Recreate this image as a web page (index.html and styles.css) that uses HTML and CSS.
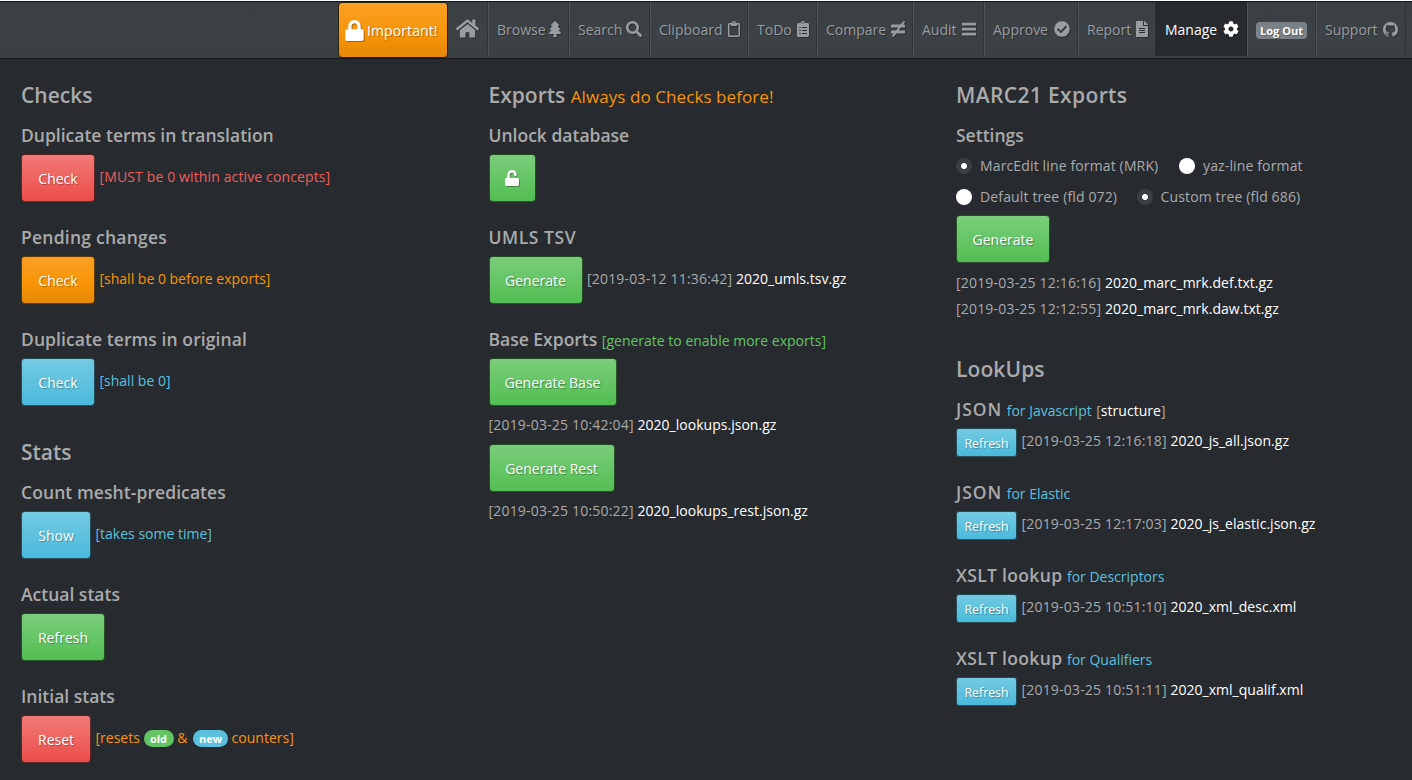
FILE: index.html
```html
<!DOCTYPE html>
<html lang="en">
<head>
<meta charset="utf-8">
<title>Manage</title>
<link rel="stylesheet" href="styles.css">
</head>
<body>
<nav class="navbar">
  <a class="nav-important"><svg class="icon" width="19" height="21" viewBox="0 0 448 512"><path d="M400 224h-24v-72C376 68.2 307.8 0 224 0S72 68.2 72 152v72H48c-26.5 0-48 21.5-48 48v192c0 26.5 21.5 48 48 48h352c26.5 0 48-21.5 48-48V272c0-26.5-21.5-48-48-48zm-104 0H152v-72c0-39.7 32.3-72 72-72s72 32.3 72 72v72z"/></svg><span>Important!</span></a>
  <a class="nav-item nav-home"><svg class="icon" width="23" height="21" viewBox="0 0 576 512"><path d="M280.37 148.26L96 300.11V464a16 16 0 0 0 16 16l112.06-.29a16 16 0 0 0 15.92-16V368a16 16 0 0 1 16-16h64a16 16 0 0 1 16 16v95.64a16 16 0 0 0 16 16.05L464 480a16 16 0 0 0 16-16V300L295.67 148.26a12.19 12.19 0 0 0-15.3 0zM571.6 251.47L488 182.56V44.05a12 12 0 0 0-12-12h-56a12 12 0 0 0-12 12v72.61L318.47 43a48 48 0 0 0-61 0L4.34 251.47a12 12 0 0 0-1.6 16.9l25.5 31A12 12 0 0 0 45.15 301l235.22-193.74a12.19 12.19 0 0 1 15.3 0L530.9 301a12 12 0 0 0 16.9-1.6l25.5-31a12 12 0 0 0-1.7-16.93z"/></svg></a>
  <a class="nav-item nav-browse"><span>Browse</span><svg class="icon" width="12" height="16" viewBox="0 0 384 512"><path d="M378.31 378.49L298.42 288h30.63c9.01 0 16.98-5 20.78-13.06 3.8-8.04 2.55-17.26-3.28-24.05L268.42 160h28.89c9.1 0 17.3-5.35 20.86-13.61 3.52-8.13 1.86-17.59-4.24-24.08L203.66 4.83c-6.03-6.45-17.28-6.45-23.32 0L70.06 122.31c-6.1 6.49-7.75 15.95-4.24 24.08C69.38 154.65 77.59 160 86.69 160h28.89l-78.14 90.91c-5.81 6.78-7.06 15.99-3.27 24.04C37.97 283 45.93 288 54.95 288h30.63L5.69 378.49c-6 6.79-7.36 16.09-3.56 24.26 3.75 8.05 12 13.25 21.01 13.25H160v24.45l-30.29 48.4c-5.32 10.64 2.42 23.16 14.31 23.16h95.96c11.89 0 19.63-12.52 14.31-23.16L224 440.45V416h136.86c9.01 0 17.26-5.2 21.01-13.25 3.8-8.17 2.44-17.47-3.56-24.26z"/></svg></a>
  <a class="nav-item nav-search"><span>Search</span><svg class="icon" width="16" height="16" viewBox="0 0 512 512"><path d="M505 442.7L405.3 343c-4.5-4.5-10.6-7-17-7H372c27.6-35.3 44-79.7 44-128C416 93.1 322.9 0 208 0S0 93.1 0 208s93.1 208 208 208c48.3 0 92.7-16.4 128-44v16.3c0 6.4 2.5 12.5 7 17l99.7 99.7c9.4 9.4 24.6 9.4 33.9 0l28.3-28.3c9.4-9.4 9.4-24.6.1-34zM208 336c-70.7 0-128-57.2-128-128 0-70.7 57.2-128 128-128 70.7 0 128 57.2 128 128 0 70.7-57.2 128-128 128z"/></svg></a>
  <a class="nav-item nav-clipboard"><span>Clipboard</span><svg class="icon" width="12" height="16" viewBox="0 0 384 512"><path d="M336 64h-80c0-35.3-28.7-64-64-64s-64 28.7-64 64H48C21.5 64 0 85.5 0 112v352c0 26.5 21.5 48 48 48h288c26.5 0 48-21.5 48-48V112c0-26.5-21.5-48-48-48zM192 40c13.3 0 24 10.7 24 24s-10.7 24-24 24-24-10.7-24-24 10.7-24 24-24zm144 418c0 3.3-2.7 6-6 6H54c-3.3 0-6-2.7-6-6V118c0-3.3 2.7-6 6-6h42v36c0 6.6 5.4 12 12 12h168c6.6 0 12-5.4 12-12v-36h42c3.3 0 6 2.7 6 6z"/></svg></a>
  <a class="nav-item nav-todo"><span>ToDo</span><svg class="icon" width="12" height="16" viewBox="0 0 384 512"><path fill-rule="evenodd" d="M336 64h-80c0-35.3-28.7-64-64-64s-64 28.7-64 64H48C21.5 64 0 85.5 0 112v352c0 26.5 21.5 48 48 48h288c26.5 0 48-21.5 48-48V112c0-26.5-21.5-48-48-48zM192 40c13.3 0 24 10.7 24 24s-10.7 24-24 24-24-10.7-24-24 10.7-24 24-24zM72 208a24 24 0 1 1 48 0 24 24 0 1 1-48 0zm0 96a24 24 0 1 1 48 0 24 24 0 1 1-48 0zm0 96a24 24 0 1 1 48 0 24 24 0 1 1-48 0zM160 192h160v32H160zm0 96h160v32H160zm0 96h160v32H160z"/></svg></a>
  <a class="nav-item nav-compare"><span>Compare</span><svg class="icon" width="14" height="16" viewBox="0 0 448 512"><path d="M416 208c17.67 0 32-14.33 32-32v-32c0-17.67-14.33-32-32-32h-23.88l51.87-66.81c5.37-7.02 4.04-17.06-2.97-22.43L415.61 3.3c-7.02-5.38-17.06-4.04-22.44 2.97L311.09 112H32c-17.67 0-32 14.33-32 32v32c0 17.67 14.33 32 32 32h204.56l-74.53 96H32c-17.67 0-32 14.33-32 32v32c0 17.67 14.33 32 32 32h55.49l-51.87 66.81c-5.37 7.01-4.04 17.05 2.97 22.43L64 508.7c7.02 5.38 17.06 4.04 22.43-2.97L168.52 400H416c17.67 0 32-14.33 32-32v-32c0-17.67-14.33-32-32-32H243.05l74.53-96H416z"/></svg></a>
  <a class="nav-item nav-audit"><span>Audit</span><svg class="icon" width="14" height="16" viewBox="0 0 448 512"><path d="M16 52h416a16 16 0 0 1 16 16v56a16 16 0 0 1-16 16H16a16 16 0 0 1-16-16V68a16 16 0 0 1 16-16zm0 160h416a16 16 0 0 1 16 16v56a16 16 0 0 1-16 16H16a16 16 0 0 1-16-16v-56a16 16 0 0 1 16-16zm0 160h416a16 16 0 0 1 16 16v56a16 16 0 0 1-16 16H16a16 16 0 0 1-16-16v-56a16 16 0 0 1 16-16z"/></svg></a>
  <a class="nav-item nav-approve"><span>Approve</span><svg class="icon" width="16" height="16" viewBox="0 0 512 512"><path d="M504 256c0 136.967-111.033 248-248 248S8 392.967 8 256 119.033 8 256 8s248 111.033 248 248zM227.314 387.314l184-184c6.248-6.248 6.248-16.379 0-22.627l-22.627-22.627c-6.248-6.249-16.379-6.249-22.628 0L216 308.118l-70.059-70.059c-6.248-6.248-16.379-6.248-22.628 0l-22.627 22.627c-6.248 6.248-6.248 16.379 0 22.627l104 104c6.249 6.249 16.379 6.249 22.628.001z"/></svg></a>
  <a class="nav-item nav-report"><span>Report</span><svg class="icon" width="12" height="16" viewBox="0 0 384 512"><path d="M224 136V0H24C10.7 0 0 10.7 0 24v464c0 13.3 10.7 24 24 24h336c13.3 0 24-10.7 24-24V160H248c-13.2 0-24-10.8-24-24zm64 236c0 6.6-5.4 12-12 12H108c-6.6 0-12-5.4-12-12v-8c0-6.6 5.4-12 12-12h168c6.6 0 12 5.4 12 12v8zm0-64c0 6.6-5.4 12-12 12H108c-6.6 0-12-5.4-12-12v-8c0-6.6 5.4-12 12-12h168c6.6 0 12 5.4 12 12v8zm0-72v8c0 6.6-5.4 12-12 12H108c-6.6 0-12-5.4-12-12v-8c0-6.6 5.4-12 12-12h168c6.6 0 12 5.4 12 12zm96-114.1v6.1H256V0h6.1c6.4 0 12.5 2.5 17 7l97.9 98c4.5 4.5 7 10.6 7 16.9z"/></svg></a>
  <a class="nav-item nav-manage active"><span>Manage</span><svg class="icon" width="16" height="16" viewBox="0 0 512 512"><path d="M487.4 315.7l-42.6-24.6c4.3-23.2 4.3-47 0-70.2l42.6-24.6c4.9-2.8 7.1-8.6 5.5-14-11.1-35.6-30-67.8-54.7-94.6-3.8-4.1-10-5.1-14.8-2.3L380.8 110c-17.9-15.4-38.5-27.3-60.8-35.1V25.8c0-5.6-3.9-10.5-9.4-11.7-36.7-8.2-74.3-7.8-109.2 0-5.5 1.2-9.4 6.1-9.4 11.7V75c-22.2 7.9-42.8 19.8-60.8 35.1L88.7 85.5c-4.9-2.8-11-1.9-14.8 2.3-24.7 26.7-43.6 58.9-54.7 94.6-1.7 5.4.6 11.2 5.5 14L67.3 221c-4.3 23.2-4.3 47 0 70.2l-42.6 24.6c-4.9 2.8-7.1 8.6-5.5 14 11.1 35.6 30 67.8 54.7 94.6 3.8 4.1 10 5.1 14.8 2.3l42.6-24.6c17.9 15.4 38.5 27.3 60.8 35.1v49.2c0 5.6 3.9 10.5 9.4 11.7 36.7 8.2 74.3 7.8 109.2 0 5.5-1.2 9.4-6.1 9.4-11.7v-49.2c22.2-7.9 42.8-19.8 60.8-35.1l42.6 24.6c4.9 2.8 11 1.9 14.8-2.3 24.7-26.7 43.6-58.9 54.7-94.6 1.5-5.5-.7-11.3-5.6-14.1zM256 336c-44.1 0-80-35.9-80-80s35.9-80 80-80 80 35.9 80 80-35.9 80-80 80z"/></svg></a>
  <a class="nav-item nav-logout"><span class="logout">Log Out</span></a>
  <a class="nav-item nav-support"><span>Support</span><svg class="icon" width="15" height="15" viewBox="0 0 16 16"><path d="M8 0C3.58 0 0 3.58 0 8c0 3.54 2.29 6.53 5.47 7.59.4.07.55-.17.55-.38 0-.19-.01-.82-.01-1.49-2.01.37-2.53-.49-2.69-.94-.09-.23-.48-.94-.82-1.13-.28-.15-.68-.52-.01-.53.63-.01 1.08.58 1.23.82.72 1.21 1.87.87 2.33.66.07-.52.28-.87.51-1.07-1.78-.2-3.64-.89-3.64-3.95 0-.87.31-1.59.82-2.15-.08-.2-.36-1.02.08-2.12 0 0 .67-.21 2.2.82.64-.18 1.32-.27 2-.27s1.36.09 2 .27c1.53-1.04 2.2-.82 2.2-.82.44 1.1.16 1.92.08 2.12.51.56.82 1.27.82 2.15 0 3.07-1.87 3.75-3.65 3.95.29.25.54.73.54 1.48 0 1.07-.01 1.93-.01 2.2 0 .21.15.46.55.38A8.01 8.01 0 0 0 16 8c0-4.42-3.58-8-8-8z"/></svg></a>
</nav>
<main class="columns">
  <div class="column">
    <h4>Checks</h4>
    <h5>Duplicate terms in translation</h5>
    <div class="row"><a class="btn red w-check">Check</a><span class="note danger">[MUST be 0 within active concepts]</span></div>
    <h5 class="loose">Pending changes</h5>
    <div class="row"><a class="btn orange w-check">Check</a><span class="note warning">[shall be 0 before exports]</span></div>
    <h5 class="slack">Duplicate terms in original</h5>
    <div class="row"><a class="btn blue w-check">Check</a><span class="note info">[shall be 0]</span></div>
    <h4 class="next">Stats</h4>
    <h5 class="slack">Count mesht-predicates</h5>
    <div class="row"><a class="btn blue w-show">Show</a><span class="note info">[takes some time]</span></div>
    <h5>Actual stats</h5>
    <div class="row"><a class="btn green w-refresh">Refresh</a></div>
    <h5>Initial stats</h5>
    <div class="row"><a class="btn red w-show">Reset</a><span class="note warning">[resets <b class="pill pill-old">old</b> <span class="amp">&amp;</span> <b class="pill pill-new">new</b> counters]</span></div>
  </div>
  <div class="column">
    <h4>Exports <small class="warning">Always do Checks before!</small></h4>
    <h5>Unlock database</h5>
    <div class="row"><a class="btn green w-unlock"><svg class="icon" width="14" height="16" viewBox="0 0 448 512"><path d="M400 256H152V152.9c0-39.6 31.7-72.5 71.3-72.9 40-.4 72.7 32.1 72.7 72v16c0 13.3 10.7 24 24 24h32c13.3 0 24-10.7 24-24v-16C376 68 307.5-.3 223.5 0 139.5.3 72 69.5 72 153.5V256H48c-26.5 0-48 21.5-48 48v160c0 26.5 21.5 48 48 48h352c26.5 0 48-21.5 48-48V304c0-26.5-21.5-48-48-48z"/></svg></a></div>
    <h5 class="umls">UMLS TSV</h5>
    <div class="row"><a class="btn green w-generate">Generate</a><span class="note"><span class="stamp">[2019-03-12 11:36:42]</span> <a class="file">2020_umls.tsv.gz</a></span></div>
    <h5>Base Exports <small class="success">[generate to enable more exports]</small></h5>
    <div class="row tight"><a class="btn green w-base">Generate Base</a></div>
    <p class="line tall"><span class="stamp">[2019-03-25 10:42:04]</span> <a class="file">2020_lookups.json.gz</a></p>
    <div class="row tight"><a class="btn green w-rest">Generate Rest</a></div>
    <p class="line tall"><span class="stamp">[2019-03-25 10:50:22]</span> <a class="file">2020_lookups_rest.json.gz</a></p>
  </div>
  <div class="column">
    <h4 class="marc">MARC21 Exports</h4>
    <h5>Settings</h5>
    <div class="radios">
      <div class="radio-row"><label class="radio r-mrk"><i class="dot on"></i><span>MarcEdit line format (MRK)</span></label><label class="radio"><i class="dot"></i><span>yaz-line format</span></label></div>
      <div class="radio-row"><label class="radio r-default"><i class="dot"></i><span>Default tree (fld 072)</span></label><label class="radio"><i class="dot on"></i><span>Custom tree (fld 686)</span></label></div>
    </div>
    <div class="row tight"><a class="btn green w-generate">Generate</a></div>
    <div class="files">
      <p class="line"><span class="stamp">[2019-03-25 12:16:16]</span> <a class="file">2020_marc_mrk.def.txt.gz</a></p>
      <p class="line"><span class="stamp">[2019-03-25 12:12:55]</span> <a class="file">2020_marc_mrk.daw.txt.gz</a></p>
    </div>
    <h4 class="lookups">LookUps</h4>
    <h5><span class="json">JSON</span> <small class="info">for Javascript</small> <small>[<a class="file">structure</a>]</small></h5>
    <div class="row"><a class="btn small blue">Refresh</a><span class="note low"><span class="stamp">[2019-03-25 12:16:18]</span> <a class="file">2020_js_all.json.gz</a></span></div>
    <h5><span class="json">JSON</span> <small class="info">for Elastic</small></h5>
    <div class="row"><a class="btn small blue">Refresh</a><span class="note low"><span class="stamp">[2019-03-25 12:17:03]</span> <a class="file">2020_js_elastic.json.gz</a></span></div>
    <h5><span class="xslt">XSLT lookup</span> <small class="info">for Descriptors</small></h5>
    <div class="row"><a class="btn small blue">Refresh</a><span class="note low"><span class="stamp">[2019-03-25 10:51:10]</span> <a class="file">2020_xml_desc.xml</a></span></div>
    <h5><span class="xslt">XSLT lookup</span> <small class="info">for Qualifiers</small></h5>
    <div class="row"><a class="btn small blue">Refresh</a><span class="note low"><span class="stamp">[2019-03-25 10:51:11]</span> <a class="file">2020_xml_qualif.xml</a></span></div>
  </div>
</main>
</body>
</html>
```

FILE: styles.css
```css
* { box-sizing: border-box; }
body {
  margin: 0;
  height: 780px;
  overflow: hidden;
  background: #272b30;
  color: #aaa;
  font-family: "Open Sans", "Noto Sans", sans-serif;
  font-size: 14px;
  border-top: 1px solid #fff;
}
.icon { fill: currentColor; flex: none; filter: drop-shadow(1px 1px 0 rgba(0, 0, 0, .3)); }

.navbar {
  height: 58px;
  display: flex;
  justify-content: flex-end;
  padding: 0 6px 1px 0;
  background: linear-gradient(#3a3f44, #3d4247 60%, #3a3f44);
  border-top: 1px solid #121416;
  border-bottom: 1px solid #121416;
  color: #999da0;
  white-space: nowrap;
  text-shadow: 1px 1px 1px rgba(0, 0, 0, .3);
}
.nav-item {
  display: flex;
  align-items: center;
  justify-content: space-between;
  height: 54px;
  padding: 0 7px 0 8px;
  border-left: 1px solid #50555a;
  border-right: 1px solid #303439;
}
.nav-important {
  display: flex;
  align-items: center;
  gap: 3px;
  width: 110px;
  height: 56px;
  padding-left: 6px;
  border: 1px solid #2c2310;
  border-radius: 4px;
  background: linear-gradient(#fba026, #f89406 60%, #e48806);
  color: #fff;
}
.nav-important span { padding-top: 1px; letter-spacing: .1px; }
.nav-home { width: 40px; border-left: 0; padding: 0 7px 2px 8px; }
.nav-browse { width: 81px; }
.nav-search { width: 81px; }
.nav-clipboard { width: 98px; }
.nav-todo { width: 69px; }
.nav-compare { width: 96px; }
.nav-audit { width: 71px; }
.nav-approve { width: 94px; }
.nav-report { width: 78px; }
.nav-manage { width: 91px; }
.nav-logout { width: 69px; }
.nav-support { width: 90px; }
.nav-item.active { background: #272b30; border-color: #202328; color: #fff; }
.logout {
  width: 51px;
  height: 17px;
  margin-top: 2px;
  border-radius: 4px;
  background: #7a8288;
  color: #fff;
  font-size: 11px;
  font-weight: 700;
  line-height: 17px;
  text-align: center;
}

.columns {
  display: grid;
  grid-template-columns: 467.5px 467.5px 1fr;
  padding: 24px 0 0 21px;
  white-space: nowrap;
}
h4, h5, p { margin: 0; }
h4 { height: 24px; margin-bottom: 17px; font-size: 21px; line-height: 24px; font-weight: 600; }
h4 small { font-size: 17px; font-weight: 400; letter-spacing: .08px; }
h4.next { margin-top: 34px; }
h4.lookups { margin-top: 35px; letter-spacing: .1px; }
h4.marc { letter-spacing: .37px; }
h5 { height: 22px; margin-bottom: 8px; font-size: 17.5px; line-height: 22px; font-weight: 600; }
h5 small { font-size: 14px; font-weight: 400; }
h5.loose { letter-spacing: .24px; }
h5.slack { letter-spacing: .08px; }
h5.umls { letter-spacing: .55px; }
.json { letter-spacing: .95px; }
.xslt { letter-spacing: .33px; }
.row { display: flex; align-items: center; gap: 4.5px; margin-bottom: 24px; }
.row.tight { margin-bottom: 0; }
.note { padding-bottom: 3px; }
.note.low { padding-bottom: 4px; }
.line { height: 26px; line-height: 26px; }
.line.tall { height: 38px; line-height: 38px; }
.files { margin-top: 7px; }
.stamp { letter-spacing: .19px; }
.file { color: #fff; letter-spacing: .03px; }
.danger { color: #ee5f5b; letter-spacing: .13px; }
.warning { color: #f89406; }
.info { color: #5bc0de; }
.success { color: #62c462; }

.btn {
  display: flex;
  align-items: center;
  justify-content: center;
  height: 48px;
  border: 1px solid rgba(0, 0, 0, .6);
  border-radius: 4px;
  background-clip: border-box;
  color: #fff;
  text-shadow: 1px 1px 1px rgba(0, 0, 0, .3);
}
.red { background-image: linear-gradient(#f17a77, #ee5f5b 60%, #ec4d49); }
.orange { background-image: linear-gradient(#fba026, #f89406 60%, #e48806); }
.blue { background-image: linear-gradient(#74cae3, #5bc0de 60%, #4ab9db); }
.green { background-image: linear-gradient(#7bcd7b, #62c462 60%, #53be53); }
.w-check { width: 74px; }
.w-show { width: 70px; }
.w-refresh { width: 84px; }
.w-unlock { width: 47px; }
.w-generate { width: 94px; }
.w-base { width: 128px; }
.w-rest { width: 126px; }
.btn.small { width: 61px; height: 29px; padding-top: 1px; border-radius: 3px; font-size: 12.3px; }

.pill {
  display: inline-block;
  height: 17px;
  border-radius: 9px;
  color: #fff;
  font-size: 11px;
  line-height: 17px;
  text-align: center;
}
.pill-old { width: 30px; background: #62c462; }
.pill-new { width: 35px; background: #5bc0de; }
.amp { letter-spacing: 2px; }

.radios { margin: -4px 0 3px; letter-spacing: .14px; }
.radio-row { display: flex; height: 31px; align-items: center; }
.radio { display: flex; align-items: center; gap: 8px; }
.r-mrk { width: 223px; }
.r-default { width: 180.5px; }
.dot { width: 16px; height: 16px; border-radius: 50%; background: #fff; }
.dot.on { background: radial-gradient(circle, #fff 2.6px, #3a3f44 3.4px); }
```
